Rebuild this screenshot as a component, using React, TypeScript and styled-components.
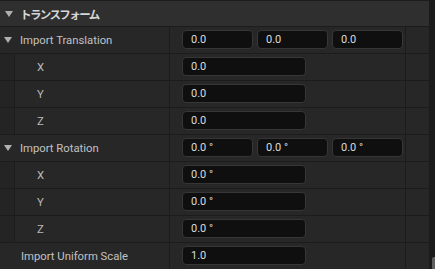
import React from "react";
import styled, { createGlobalStyle } from "styled-components";

const Global = createGlobalStyle`
  html, body {
    margin: 0;
    padding: 0;
    background: #1a1a1a;
    overflow: hidden;
  }
  body {
    font-family: Roboto, "Noto Sans CJK JP", "Noto Sans", sans-serif;
  }
`;

const Frame = styled.div`
  display: flex;
  width: 435px;
  height: 269px;
  overflow: hidden;
`;

const Panel = styled.div`
  flex: 1;
  display: flex;
  flex-direction: column;
  border-top: 1px solid #1c1c1c;
`;

const ScrollTrack = styled.div`
  width: 6px;
  position: relative;
  background: #1b1b1b;
`;

const ScrollThumb = styled.div`
  position: absolute;
  right: 0;
  top: 257px;
  width: 3px;
  height: 24px;
  border-radius: 2px 0 0 0;
  background: #5e5e5e;
`;

const Header = styled.div`
  height: 25px;
  flex-shrink: 0;
  display: flex;
  align-items: center;
  background: #2f2f2f;
  border-bottom: 1px solid #1c1c1c;
  color: #d6d6d6;
  font-size: 11.5px;
  font-weight: 700;
  letter-spacing: -1.6px;
`;

const Caret = styled.span`
  width: 0;
  height: 0;
  margin: 0 7px 0 5px;
  border-left: 4.5px solid transparent;
  border-right: 4.5px solid transparent;
  border-top: 6px solid #b0b0b0;
`;

const Row = styled.div`
  height: 26px;
  flex-shrink: 0;
  display: grid;
  grid-template-columns: 170px 236px 1fr;
  background: #272727;
  border-bottom: 1px solid #1c1c1c;
`;

const NameCell = styled.div<{ $child?: boolean }>`
  display: flex;
  align-items: center;
  border-right: 1px solid #1c1c1c;
  color: ${(p) => (p.$child ? "#bababa" : "#c2c2c2")};
  font-size: 11.3px;
  padding-left: ${(p) => (p.$child ? "0" : "21px")};
`;

const Indent = styled.div`
  align-self: stretch;
  width: 14px;
  margin-right: 22px;
  background: #242424;
  border-right: 1px solid #1c1c1c;
`;

const RowCaret = styled(Caret)`
  margin: 0 8px 0 -17px;
`;

const ValueCell = styled.div<{ $wide?: boolean }>`
  display: flex;
  align-items: center;
  gap: 4px;
  padding: 0 ${(p) => (p.$wide ? "2px" : "0")} 0 12px;
  border-right: 1px solid #1c1c1c;
`;

const Field = styled.div<{ $grow?: boolean }>`
  box-sizing: border-box;
  height: 19px;
  width: ${(p) => (p.$grow ? "auto" : "124px")};
  flex: ${(p) => (p.$grow ? "1" : "none")};
  display: flex;
  align-items: center;
  padding-left: 8px;
  background: #0f0f0f;
  border: 1px solid #363636;
  border-radius: 4px;
  color: #dcdcdc;
  font-size: 11px;
  margin-top: -1px;
`;

const Spare = styled.div``;

type Item =
  | { kind: "group"; label: string; values: string[] }
  | { kind: "child"; label: string; value: string }
  | { kind: "plain"; label: string; value: string };

const items: Item[] = [
  { kind: "group", label: "Import Translation", values: ["0.0", "0.0", "0.0"] },
  { kind: "child", label: "X", value: "0.0" },
  { kind: "child", label: "Y", value: "0.0" },
  { kind: "child", label: "Z", value: "0.0" },
  { kind: "group", label: "Import Rotation", values: ["0.0 °", "0.0 °", "0.0 °"] },
  { kind: "child", label: "X", value: "0.0 °" },
  { kind: "child", label: "Y", value: "0.0 °" },
  { kind: "child", label: "Z", value: "0.0 °" },
  { kind: "plain", label: "Import Uniform Scale", value: "1.0" },
];

export default function App() {
  return (
    <Frame>
      <Global />
      <Panel>
        <Header>
          <Caret />
          トランスフォーム
        </Header>
        {items.map((it, i) => (
          <Row key={i}>
            {it.kind === "group" ? (
              <>
                <NameCell>
                  <RowCaret />
                  {it.label}
                </NameCell>
                <ValueCell $wide>
                  {it.values.map((v, j) => (
                    <Field key={j} $grow>
                      {v}
                    </Field>
                  ))}
                </ValueCell>
              </>
            ) : it.kind === "child" ? (
              <>
                <NameCell $child>
                  <Indent />
                  {it.label}
                </NameCell>
                <ValueCell>
                  <Field>{it.value}</Field>
                </ValueCell>
              </>
            ) : (
              <>
                <NameCell>{it.label}</NameCell>
                <ValueCell>
                  <Field>{it.value}</Field>
                </ValueCell>
              </>
            )}
            <Spare />
          </Row>
        ))}
      </Panel>
      <ScrollTrack>
        <ScrollThumb />
      </ScrollTrack>
    </Frame>
  );
}
